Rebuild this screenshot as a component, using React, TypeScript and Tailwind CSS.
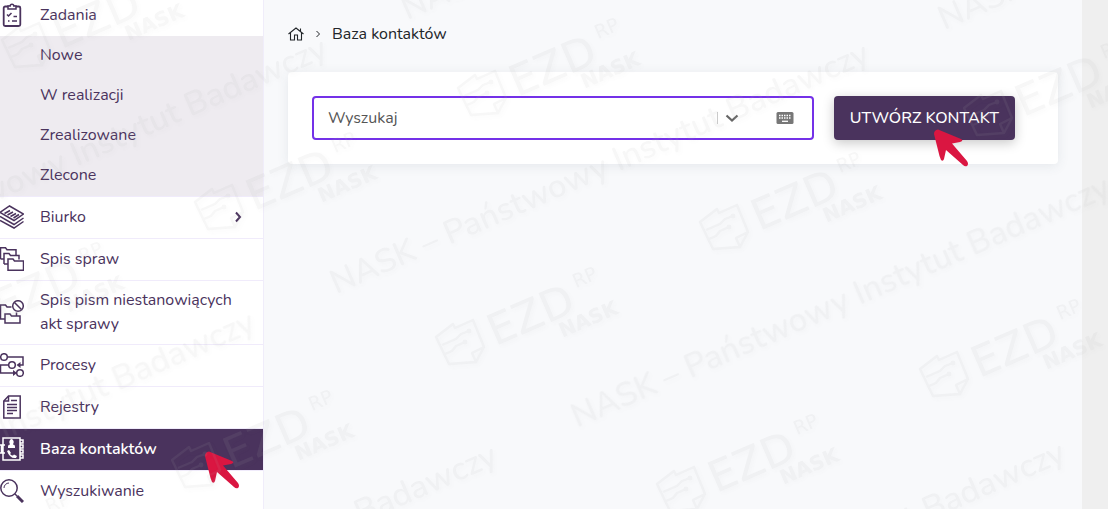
import React from "react";

const MARK_TEXT = "NASK – Państwowy Instytut Badawczy";

const textSpots: [number, number][] = [
  [336, 294], [577, 428], [-206, 289], [-278, 563], [-36, 696], [532, 693], [407, 20], [944, 30],
];

const logoSpots: [number, number][] = [
  [436, 337], [458, 88], [700, 222], [920, 369], [964, 108], [657, 484], [195, 202], [172, 460], [2, 40], [-58, 312], [-91, 562],
];

function Watermark() {
  return (
    <svg className="pointer-events-none fixed inset-0 z-20 size-full" aria-hidden="true">
      <defs>
        <g id="mark-logo">
          <path
            d="M0 0 17-13 19-9 37-17 48 10 40 25 13 27ZM48 10 36 16 40 25M6 8 20 2 25-3 33-6M9 17 16 14 20 9 29 5"
            fill="none" stroke="#aaa" strokeWidth="2.4" strokeLinejoin="round"
          />
          <circle cx="33" cy="-6" r="2.4" fill="#aaa" />
          <circle cx="29" cy="5" r="2.4" fill="#aaa" />
          <g transform="translate(64 5) rotate(-23.5)" fill="#aaa" className="font-['DejaVu_Sans',sans-serif]">
            <text x="-6" y="2" fontSize="43">EZD</text>
            <text x="91" y="-19" fontSize="19">RP</text>
            <text x="59" y="21" fontSize="20" fontWeight="700">NASK</text>
          </g>
        </g>
      </defs>
      <g opacity="0.1" className="[filter:drop-shadow(2px_2px_2px_rgba(120,120,120,0.35))]">
        {logoSpots.map(([x, y], i) => <use key={i} href="#mark-logo" x={x} y={y} />)}
        {textSpots.map(([x, y], i) => (
          <text
            key={i} transform={`translate(${x} ${y}) rotate(-23.5)`}
            fontSize="33" fontWeight="500" fill="#aaa" fontFamily="Nunito, Open Sans, sans-serif"
          >
            {MARK_TEXT}
          </text>
        ))}
      </g>
    </svg>
  );
}

function Icon({ children }: { children: React.ReactNode }) {
  return (
    <svg viewBox="0 0 24 24" className="size-6 shrink-0" fill="none" stroke="currentColor" strokeWidth="1.5" aria-hidden="true">
      {children}
    </svg>
  );
}

const TasksIcon = () => (
  <Icon>
    <rect x="3.7" y="3.5" width="16.6" height="19.5" rx="1.5" strokeWidth="1.8" />
    <path d="M8 3v3h8V3h-2.2a1.8 1.8 0 0 0-3.6 0Z" fill="white" />
    <path d="m7 11.5 1.5 1.5 3-3M13.5 13.5H17M8 18h1.5M12 18h5" />
  </Icon>
);
const DeskIcon = () => (
  <Icon>
    <path d="M0 7.5 9.5 1 23.5 9 14 15.5ZM0 11.5l14 8 9.5-6.500M0 15.5l14 7.5 9.5-6.500" />
    <path d="M4.5 8.500 10 5.500M7.500 10 13 7M10.500 11.500 16 8.500M13.500 13 19 9.500" />
  </Icon>
);
const FoldersIcon = () => (
  <Icon>
    <path d="M8 20V12h5l1.500 2h9v9.300H8ZM4 17V6.500h5l1.500 2H19v4M8 17H4M.5 12V.8h5l1.500 2H16V8M4 12H.5" />
  </Icon>
);
const NoCaseIcon = () => (
  <Icon>
    <path d="M5 14h5l1.500 2H20v7H5ZM5 19H.5V5h5l1.500 2h4.500M16.500 12.500V16" />
    <circle cx="18" cy="6" r="5.3" />
    <path d="m14.500 2.500 7 7" />
  </Icon>
);
const ProcessIcon = () => (
  <Icon>
    <circle cx="4" cy="4" r="3.3" />
    <circle cx="12" cy="12" r="3.3" />
    <circle cx="20" cy="20" r="3.3" />
    <path d="M7.500 4H23v8h-4M8.500 12H.5v8H14" />
    <path d="m20.500 9-4 3 4 3ZM13 17l4 3-4 3Z" fill="currentColor" stroke="none" />
  </Icon>
);
const RegisterIcon = () => (
  <Icon>
    <path d="M8.500 1h11.700v22H3.800V6Z" />
    <path d="M8.500 1v5H3.800M11 5.500h6M7 9.500h10M7 12.500h10M7 15.500h10M7 18.500h6" />
  </Icon>
);
const ContactsIcon = () => (
  <Icon>
    <path d="M3 1h17v22H3ZM0 8h5M0 16h5M1.500 8v8M20 3h3v3h-3M20 8h3v3h-3M20 13h3v3h-3M20 18h3v3h-3" />
    <path d="M8 11V9.500q0-2 2-2a2.300 3 0 1 1 3 0q2 0 2 2V11ZM7 14l2-1 2 3-1 1q2 2 3 1.500l1-1 3 1.500-1 2q-6 1-9-7Z" fill="currentColor" stroke="none" />
  </Icon>
);
const SearchIcon = () => (
  <Icon>
    <circle cx="9" cy="9" r="8.2" />
    <path d="M4 9a5 5 0 0 1 5-5" strokeWidth="1" />
    <path d="m15 15 2 2" />
    <path d="m17 17 6 6" strokeWidth="3" />
  </Icon>
);

function Pointer({ className }: { className: string }) {
  return (
    <svg viewBox="0 0 34 38" className={`pointer-events-none absolute z-10 h-[38px] w-[34px] ${className}`} aria-hidden="true">
      <path d="M4 .5 27 10Q30 12 26 13L18 14.500 33 32Q35 35 33 37 31 38 29 36L12 21 10 30Q9 33 7 31L5.500 27 0 5Q0 1 4 .5Z" fill="#da1641" />
    </svg>
  );
}

const subItems = ["Nowe", "W realizacji", "Zrealizowane", "Zlecone"];

const items = [
  { label: "Biurko", icon: <DeskIcon />, arrow: true },
  { label: "Spis spraw", icon: <FoldersIcon /> },
  { label: "Spis pism niestanowiących akt sprawy", icon: <NoCaseIcon />, tall: true },
  { label: "Procesy", icon: <ProcessIcon /> },
  { label: "Rejestry", icon: <RegisterIcon /> },
  { label: "Baza kontaktów", icon: <ContactsIcon />, active: true },
  { label: "Wyszukiwanie", icon: <SearchIcon /> },
];

function Sidebar() {
  return (
    <nav className="w-[264px] shrink-0 overflow-hidden border-r border-[#f0edfa] bg-white text-[#4a335d]">
      <a href="#zadania" className="-mt-2 flex h-11 items-center gap-4 pr-4 pt-px">
        <TasksIcon />
        <span>Zadania</span>
      </a>
      <ul className="bg-[#eeebf0]">
        {subItems.map((s) => (
          <li key={s}>
            <a href="#zadania" className="flex h-10 items-center pb-0.5 pl-10">{s}</a>
          </li>
        ))}
      </ul>
      <ul>
        {items.map((it) => (
          <li key={it.label} className="relative">
            <a
              href="#menu"
              className={`flex items-center gap-4 border-t border-[#f0ebfb] pb-0.5 pr-4 leading-6 ${it.tall ? "h-16" : "h-[42px]"} ${it.active ? "bg-[#4a335d] font-semibold text-white" : ""}`}
            >
              {it.icon}
              <span className="flex-1">{it.label}</span>
              {it.arrow && (
                <svg viewBox="0 0 16 16" className="mr-px size-4" fill="none" stroke="currentColor" strokeWidth="2" aria-hidden="true">
                  <path d="m6 3.500 4 4.500-4 4.500" />
                </svg>
              )}
            </a>
            {it.active && <Pointer className="left-[205px] top-[23px]" />}
          </li>
        ))}
      </ul>
    </nav>
  );
}

export default function App() {
  return (
    <div className="flex h-screen overflow-hidden bg-[#f8f9fb] font-['Nunito','Open_Sans',sans-serif] text-base">
      <Sidebar />
      <main className="min-w-0 flex-1 px-6 pt-[22px]">
        <div className="flex h-6 items-center text-[#212529]">
          <a href="#home" aria-label="Strona główna">
            <svg viewBox="0 0 16 16" className="size-4" fill="none" stroke="currentColor" strokeWidth="1.1" aria-hidden="true">
              <path d="M.5 8 8 2 15.500 8M2.500 6.500v7.500h4V9h3v5h4V6.500M12.500 5V2.500" />
            </svg>
          </a>
          <svg viewBox="0 0 8 8" className="mx-2.5 size-2" fill="none" stroke="currentColor" aria-hidden="true">
            <path d="m2.500 1 3 3-3 3" />
          </svg>
          <span>Baza kontaktów</span>
        </div>
        <section className="mt-[26px] flex gap-5 rounded bg-white py-6 pl-6 pr-[43px] shadow-[0_2px_12px_rgba(60,80,100,0.1)]">
          <div className="flex h-11 min-w-0 flex-1 items-center rounded border-2 border-[#7431e8] pl-[14px] pr-[18px]">
            <input aria-label="Wyszukaj" placeholder="Wyszukaj" className="min-w-0 flex-1 bg-transparent outline-none placeholder:text-[#555]" />
            <span className="h-3 w-px bg-[#ccc]" />
            <button aria-label="Rozwiń" className="ml-1.5">
              <svg viewBox="0 0 16 16" className="size-4" fill="none" stroke="#666" strokeWidth="2.2" aria-hidden="true">
                <path d="m2.500 5.500 5.500 5 5.500-5" />
              </svg>
            </button>
            <button aria-label="Klawiatura" className="ml-9">
              <svg viewBox="0 0 18 12" className="h-3 w-[18px]" aria-hidden="true">
                <rect x=".5" width="17" height="12" rx="1.5" fill="#777" />
                <path d="M3 3.500h12.500M3 6h12.500" stroke="white" strokeWidth="1.5" strokeDasharray="1.500 1" />
                <path d="M6 9.300h6" stroke="white" strokeWidth="1.3" />
              </svg>
            </button>
          </div>
          <div className="relative">
            <button className="h-11 rounded bg-[#4a335d] px-4 font-medium text-white shadow-[0_3px_12px_rgba(0,0,0,0.22)]">
              UTWÓRZ KONTAKT
            </button>
            <Pointer className="left-[100px] top-[33px]" />
          </div>
        </section>
      </main>
      <div className="w-[26px] shrink-0 bg-[#efefef]" />
      <Watermark />
    </div>
  );
}
